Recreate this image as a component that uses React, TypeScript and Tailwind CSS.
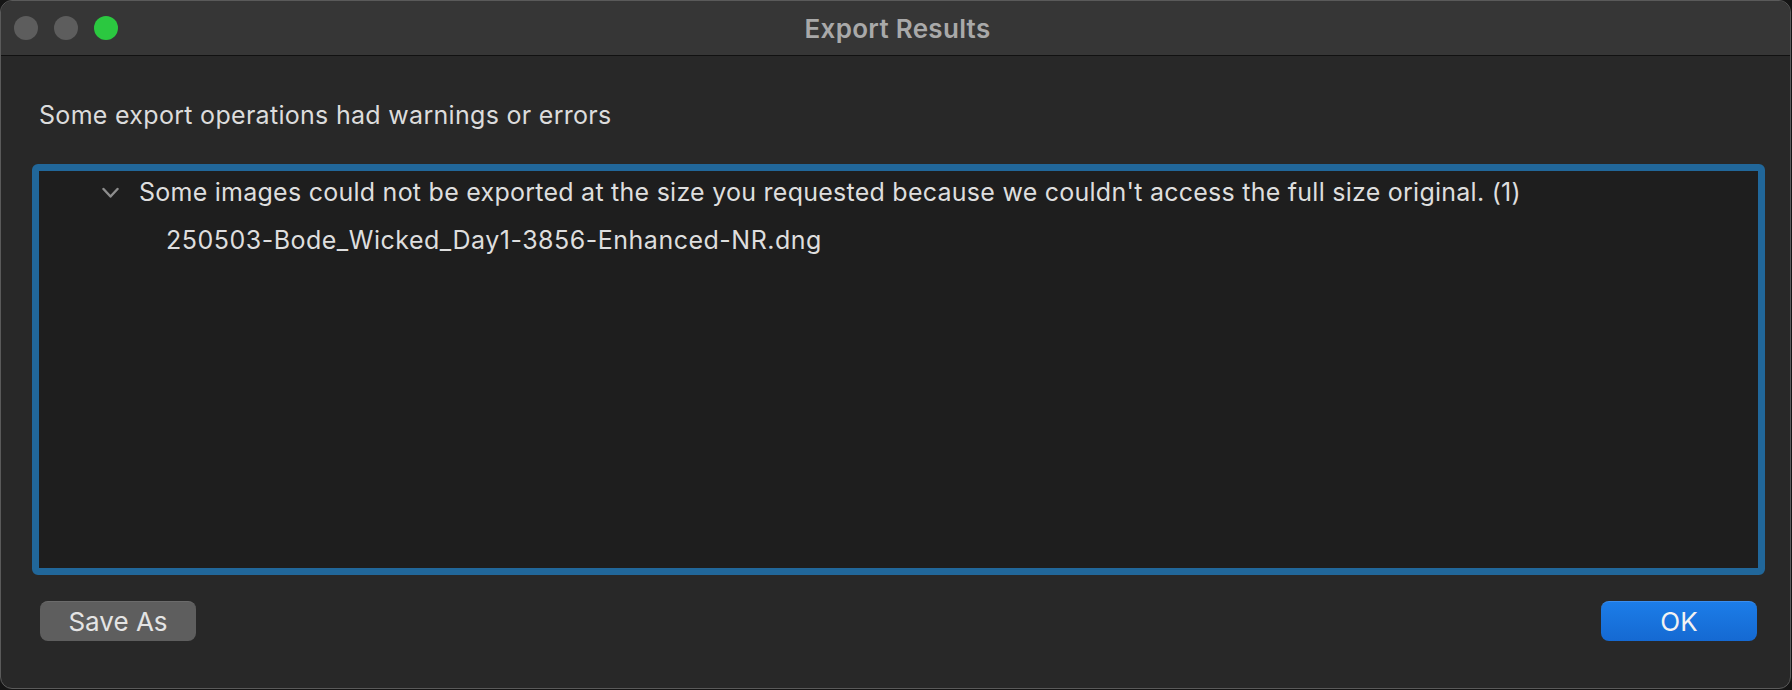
import React from 'react';

const font = { fontFamily: 'Inter, "Noto Sans", sans-serif' };

function Chevron() {
  return (
    <svg width="17" height="12" viewBox="0 0 17 12" className="shrink-0">
      <polyline points="1.5,2 8.5,9.5 15.5,2" fill="none" stroke="#8d8d8d" strokeWidth="2.4" strokeLinecap="round" strokeLinejoin="round" />
    </svg>
  );
}

export default function App() {
  return (
    <div className="w-[1792px] h-[690px] bg-[#151515]" style={font}>
      <div className="w-[1791px] h-[689px] rounded-[12px] border border-[#5a5a5a] bg-[#282828] overflow-hidden flex flex-col">
        {/* Title bar */}
        <div className="relative h-[55px] shrink-0 bg-[#363636] border-b border-[#111111] flex items-center">
          <div className="flex items-center gap-[16px] pl-[13px]">
            <div className="w-[24px] h-[24px] rounded-full bg-[#5d5d5d]" />
            <div className="w-[24px] h-[24px] rounded-full bg-[#5d5d5d]" />
            <div className="w-[24px] h-[24px] rounded-full bg-[#2bc840]" />
          </div>
          <div className="absolute inset-0 flex items-center justify-center pointer-events-none">
            <span className="text-[26px] font-semibold tracking-[0.3px] text-[#a9a9a9] pl-[4px]">Export Results</span>
          </div>
        </div>

        {/* Body */}
        <div className="flex-1 flex flex-col">
          <p className="mt-[45px] ml-[38px] text-[25px] leading-[29px] tracking-[0.3px] text-[#dcdcdc]">
            Some export operations had warnings or errors
          </p>

          <div className="mt-[34px] ml-[31px] mr-[25px] h-[411px] rounded-[6px] border-[7px] border-[#21679a] bg-[#1e1e1e]">
            <div className="flex flex-col gap-[19px] pt-[7px]">
              <div className="flex items-center pl-[63px] gap-[20px] text-[25px] leading-[29px] tracking-[0.25px] text-[#dedede]">
                <Chevron />
                <span className="whitespace-nowrap">
                  Some images could not be exported at the size you requested because we couldn't access the full size original. (1)
                </span>
              </div>
              <div className="pl-[127px] text-[25px] leading-[29px] tracking-[0.5px] text-[#dedede] whitespace-nowrap">
                250503-Bode_Wicked_Day1-3856-Enhanced-NR.dng
              </div>
            </div>
          </div>

          <div className="mt-[26px] flex justify-between pl-[39px] pr-[33px]">
            <button className="w-[156px] h-[40px] rounded-[8px] bg-[#5e5e5e] border-t border-[#6b6b6b] text-[26px] leading-none text-[#e4e4e4]">
              Save As
            </button>
            <button className="w-[156px] h-[40px] rounded-[8px] bg-gradient-to-b from-[#1c7de8] to-[#1569d2] border-t border-[#3a8ef0] text-[26px] leading-none text-[#f2f2f2]">
              OK
            </button>
          </div>
        </div>
      </div>
    </div>
  );
}
